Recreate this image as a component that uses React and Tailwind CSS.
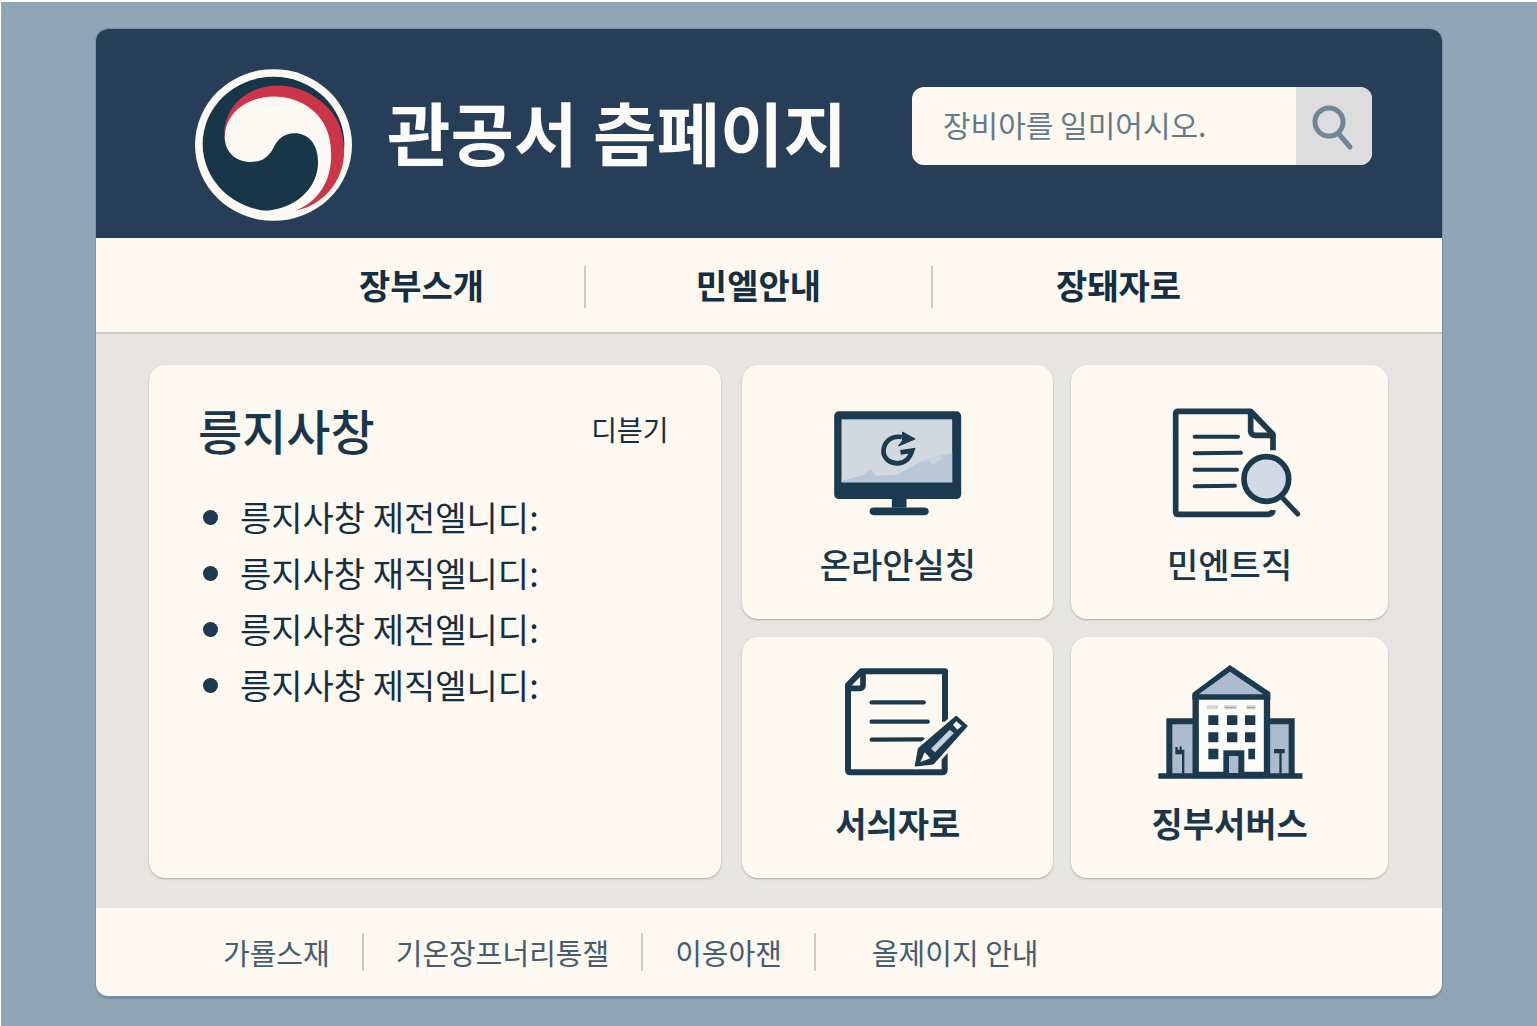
import React from "react";

const NAV = ["장부스개", "민엘안내", "장돼자로"];
const NOTICES = [
  "릉지사창 제전엘니디:",
  "릉지사창 재직엘니디:",
  "릉지사창 제전엘니디:",
  "릉지사창 제직엘니디:",
];
const FOOTER = ["가룔스재", "기온장프너리통잴", "이옹아잰"];

function Emblem() {
  return (
    <svg viewBox="45 27 472 456" className="h-[152px] w-[157px] shrink-0" aria-hidden="true">
      <ellipse cx="281" cy="255" rx="236" ry="228" fill="#fcf8f2" />
      <ellipse cx="281" cy="252" rx="213" ry="202" fill="#173648" />
      <path
        d="M134 240C124 140 205 76 296 76C368 76 440 122 471 178C488 212 494 245 493 285C488 365 432 436 345 453C410 420 440 360 438 285C425 180 355 128 284 128C205 128 155 175 145 240Z"
        fill="#cb3449"
      />
      <path
        d="M135 222C142 150 210 109 284 109C350 110 404 142 432 190C450 222 456 258 454 300C450 362 420 424 345 453L335 466L250 460V453C345 450 415 386 415 306C415 252 385 220 344 220C314 220 295 236 281 263C267 290 247 306 213 306C165 306 130 272 135 222Z"
        fill="#fcf8f2"
      />
    </svg>
  );
}

function MonitorIcon() {
  return (
    <svg viewBox="100 45 386 318" className="h-[106px] w-[129px]" aria-hidden="true">
      <rect x="103" y="49" width="381" height="263" rx="14" fill="#1c3a4d" />
      <rect x="125" y="73" width="332" height="189" fill="#d2d8e0" />
      <path
        d="M125 257L160 248L190 240L213 222L226 242L290 240L350 207L385 190L457 175V262H125Z"
        fill="#b9c8d7"
      />
      <path d="M345 207L362 202L385 196L400 210L430 190L420 184L385 190Z" fill="#c9d4df" />
      <path d="M276 310H320V338H276Z" fill="#1c3a4d" />
      <path d="M221 349H375" stroke="#1c3a4d" strokeWidth="23" strokeLinecap="round" />
      <path
        d="M306 126C272 121 251 143 251 170C252 191 270 205 294 205C317 204 331 187 337 167L302 172"
        fill="none"
        stroke="#1c3a4d"
        strokeWidth="14"
        strokeLinejoin="miter"
      />
      <path d="M308 111L346 132L296 153L308 137Z" fill="#1c3a4d" stroke="#1c3a4d" strokeWidth="3" strokeLinejoin="round" />
    </svg>
  );
}

function DocumentSearchIcon() {
  return (
    <svg viewBox="52 39 426 330" className="h-[110px] w-[142px]" aria-hidden="true">
      <g fill="none" stroke="#1c3a4d" strokeWidth="17" strokeLinecap="round" strokeLinejoin="round">
        <path d="M394 166V118L327 49H110Q102 49 102 57V350Q102 358 110 358H380Q393 357 394 345" strokeLinecap="butt" />
        <path d="M327 53V108Q328 121 341 121H390" />
        <g strokeWidth="12">
          <path d="M159 125H289" />
          <path d="M159 175L298 173" />
          <path d="M159 224H286" />
          <path d="M159 274L280 272" />
          <path d="M420 306L468 357" strokeWidth="15" />
        </g>
        <circle cx="374" cy="252" r="67" fill="#d1d9e6" />
      </g>
    </svg>
  );
}

function DocumentEditIcon() {
  return (
    <svg viewBox="52 34 420 330" className="h-[110px] w-[140px]" aria-hidden="true">
      <g fill="none" stroke="#1c3a4d" strokeWidth="18" strokeLinejoin="round">
        <path d="M403 198V47H152L112 88V342Q112 350 120 350H394Q402 350 402 342V293" />
        <path d="M157 50V90Q156 98 148 98H113" strokeWidth="17" />
        <g strokeWidth="13" strokeLinecap="round">
          <path d="M183 140H339" />
          <path d="M183 198H351" />
          <path d="M183 252L336 251" />
        </g>
      </g>
      <path
        d="M437 184L467 211L367 323L316 329L325 280Z"
        fill="#fdf8f0"
        stroke="#fdf8f0"
        strokeWidth="24"
        strokeLinejoin="round"
      />
      <path d="M437 184L467 211L367 323L316 329L325 280Z" fill="#1c3a4d" stroke="#1c3a4d" strokeWidth="7" strokeLinejoin="round" />
      <path d="M437 197L453 211L440 222L427 208Z" fill="#fcf8f0" />
      <path d="M417 222L430 232L373 290L361 279Z" fill="#c3d0dd" />
      <path d="M342 290L359 308L329 319Z" fill="#fcf8f0" />
    </svg>
  );
}

function BuildingIcon() {
  return (
    <svg viewBox="80 26 438 342" className="h-[114px] w-[146px] shrink-0" aria-hidden="true">
      <g fill="#adbccd" stroke="#1c3a4d" strokeWidth="18">
        <path d="M117 356V195H200V356" />
        <path d="M410 356V195H484V356" />
      </g>
      <path d="M196 356V115L299 38L410 113V356Z" fill="#fdfcf8" stroke="#1c3a4d" strokeWidth="19" />
      <path d="M203 115L299 46L401 115Z" fill="#adbccd" />
      <path d="M186 122H420" stroke="#1c3a4d" strokeWidth="17" />
      <path d="M84 359H516" stroke="#1c3a4d" strokeWidth="17" />
      <g fill="#1c3a4d">
        <path d="M234 177h30v29h-30zM290 177h31v29h-31zM344 177h31v29h-31zM234 228h30v30h-30zM290 228h31v30h-31zM344 228h31v30h-31zM234 277h30v32h-30zM354 277h20v32h-20z" />
        <path d="M279 282H342V352H279Z" />
        <path d="M135 272H142V280H148V270H154V280H162V352H155V294H135Z" />
        <path d="M431 278H463V291H454V352H447V291H431Z" />
      </g>
      <path d="M296 299H324V350H296Z" fill="#adbccd" />
      <path d="M230 153H263M281 153H319M348 153H376" stroke="#d4d6d7" strokeWidth="12" />
      <path d="M284 154H318M350 154H374" stroke="#929ca6" strokeWidth="3" />
    </svg>
  );
}

function Tile({ label, icon, className }) {
  return (
    <a
      href="#"
      className={
        "flex flex-col items-center rounded-2xl bg-[#fdf8f0] pb-[35px] shadow-[0_1px_2px_rgba(90,95,100,0.45)] " +
        className
      }
    >
      <span className="flex h-[110px] items-center justify-center">{icon}</span>
      <span className="mt-[26px] whitespace-nowrap text-[34px] leading-10 text-[#19364a]">{label}</span>
    </a>
  );
}

export default function App() {
  return (
    <div className="min-h-screen border-t-2 border-l border-white bg-[#91a6b5] px-[95px] pt-[27px] pb-[30px] font-['Noto_Sans_CJK_KR',sans-serif] text-[#142f41]">
      <div className="overflow-hidden rounded-xl bg-[#fdf8f0] shadow-[0_3px_1px_#788ea3,0_0_2px_#53697d]">
        <header className="flex items-start bg-[#263e57] pt-10 pr-[70px] pb-[17px] pl-[99px]">
          <Emblem />
          <h1 className="mt-4 ml-[35px] whitespace-nowrap text-[69px] leading-[92px] font-bold text-[#fdfbf7]">
            관공서 츰페이지
          </h1>
          <form
            className="mt-[18px] ml-auto flex h-[78px] w-[460px] overflow-hidden rounded-xl bg-[#fdf8f0]"
            onSubmit={(e) => e.preventDefault()}
          >
            <input
              type="text"
              aria-label="검색어"
              placeholder="장비아를 일미어시오."
              className="min-w-0 flex-1 bg-transparent pb-1 pl-[31px] text-[30px] text-[#536b7b] outline-none placeholder:text-[#647b89]"
            />
            <button type="submit" aria-label="검색" className="flex w-[76px] items-center justify-center bg-[#dcdddc] pt-1">
              <svg viewBox="0 0 44 48" className="h-12 w-11" fill="none" stroke="#708695" strokeWidth="5" strokeLinecap="round" aria-hidden="true">
                <circle cx="17" cy="18" r="14" />
                <path d="M26 29L38 43" />
              </svg>
            </button>
          </form>
        </header>

        <nav className="grid h-24 grid-cols-[326fr_346fr_370fr] items-center border-b-2 border-[#cbcbc8] pt-1 pr-[138px] pl-[163px]">
          {NAV.map((n, i) => (
            <div
              key={n}
              className={
                i < 2
                  ? "flex h-[42px] items-center justify-center border-r-2 border-[#c9cccd] pb-1"
                  : "flex h-[42px] items-center justify-center pb-1"
              }
            >
              <a href="#" className="whitespace-nowrap text-[34px] leading-10 font-bold">
                {n}
              </a>
            </div>
          ))}
        </nav>

        <main className="grid grid-cols-[572fr_645fr] gap-[21px] bg-[#e6e5e1] pt-[31px] pr-[54px] pb-[30px] pl-[53px]">
          <section className="min-w-0 rounded-2xl bg-[#fdf8f0] pt-8 pr-[53px] pl-[49px] shadow-[0_1px_2px_rgba(90,95,100,0.45)]">
            <div className="flex items-center justify-between">
              <h2 className="text-[48px] leading-16 font-medium text-[#19364a]">릉지사창</h2>
              <a href="#" className="text-[28px] leading-10">
                디븓기
              </a>
            </div>
            <ul className="mt-7">
              {NOTICES.map((n, i) => (
                <li key={i} className="flex items-center pl-[5px] text-[34px] leading-14">
                  <span className="mr-[22px] size-[15px] rounded-full bg-[#1c3a4f]" />
                  <a href="#" className="whitespace-nowrap">
                    {n}
                  </a>
                </li>
              ))}
            </ul>
          </section>

          <div className="grid min-w-0 grid-cols-[311fr_317fr] gap-[18px]">
            <Tile label="온라안실칭" icon={<MonitorIcon />} className="pt-[43px] font-medium" />
            <Tile label="민엔트직" icon={<DocumentSearchIcon />} className="pt-[43px] font-medium" />
            <Tile label="서싀자로" icon={<DocumentEditIcon />} className="pt-[30px] font-bold" />
            <Tile label="징부서버스" icon={<BuildingIcon />} className="pt-[30px] font-bold" />
          </div>
        </main>

        <footer className="flex h-[88px] items-center pl-[127px] text-[29px] leading-10 text-[#455d6d]">
          {FOOTER.map((f) => (
            <div key={f} className="mr-8 flex h-[38px] items-center border-r-2 border-[#c9cccd] pr-8">
              <a href="#" className="whitespace-nowrap">
                {f}
              </a>
            </div>
          ))}
          <a href="#" className="ml-6 whitespace-nowrap">
            올제이지 안내
          </a>
        </footer>
      </div>
    </div>
  );
}
